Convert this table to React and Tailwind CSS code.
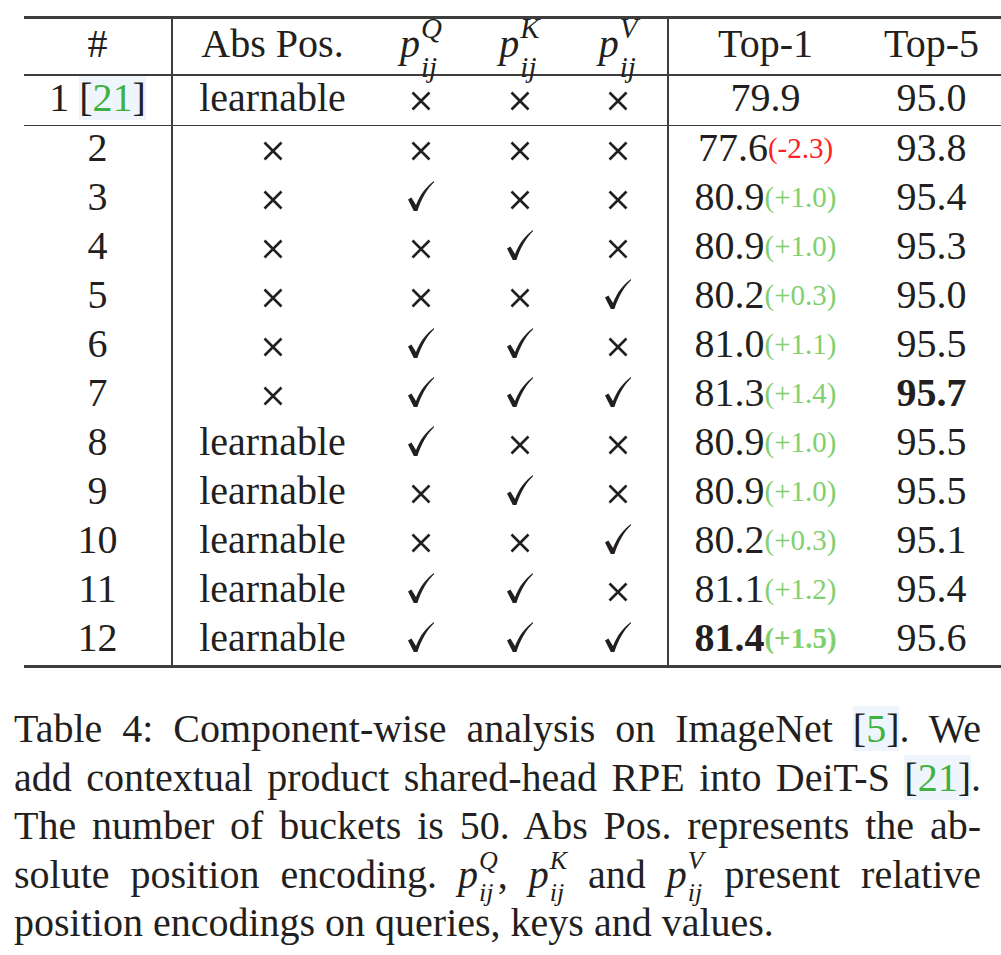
import React from "react"

const serif = { fontFamily: '"Liberation Serif", "Times New Roman", serif' }

const grid = "grid grid-cols-[147px_201px_98px_99px_98px_195px_139px]"

// table data: q/k/v true = check, false = cross; abs null = cross
const rows = [
  { n: "2", abs: null, q: false, k: false, v: false, top1: "77.6", d: "(-2.3)", neg: true, top5: "93.8" },
  { n: "3", abs: null, q: true, k: false, v: false, top1: "80.9", d: "(+1.0)", top5: "95.4" },
  { n: "4", abs: null, q: false, k: true, v: false, top1: "80.9", d: "(+1.0)", top5: "95.3" },
  { n: "5", abs: null, q: false, k: false, v: true, top1: "80.2", d: "(+0.3)", top5: "95.0" },
  { n: "6", abs: null, q: true, k: true, v: false, top1: "81.0", d: "(+1.1)", top5: "95.5" },
  { n: "7", abs: null, q: true, k: true, v: true, top1: "81.3", d: "(+1.4)", top5: "95.7", bold5: true },
  { n: "8", abs: "learnable", q: true, k: false, v: false, top1: "80.9", d: "(+1.0)", top5: "95.5" },
  { n: "9", abs: "learnable", q: false, k: true, v: false, top1: "80.9", d: "(+1.0)", top5: "95.5" },
  { n: "10", abs: "learnable", q: false, k: false, v: true, top1: "80.2", d: "(+0.3)", top5: "95.1" },
  { n: "11", abs: "learnable", q: true, k: true, v: false, top1: "81.1", d: "(+1.2)", top5: "95.4" },
  { n: "12", abs: "learnable", q: true, k: true, v: true, top1: "81.4", d: "(+1.5)", top5: "95.6", bold1: true },
]

const Check = () => (
  <svg width="26" height="30" viewBox="0 0 26 30" className="block -mt-[2px]">
    <path d="M0 18.5 L3.4 16.6 L8 24 C12 13.5 18 6 26 0 L26 1.2 C19 8 13.5 17.5 9.4 30 L5.8 30 Z" fill="#231f20" />
  </svg>
)

const Cross = () => (
  <svg width="20" height="20" viewBox="0 0 20 20" className="block mt-[5px]">
    <path d="M1.5 1.5 L18.5 18.5 M18.5 1.5 L1.5 18.5" stroke="#231f20" strokeWidth="2.6" />
  </svg>
)

const Mark = ({ on }) => (on ? <Check /> : <Cross />)

const Pij = ({ sup, small }) => (
  <span className="whitespace-nowrap">
    <span className="italic">p</span>
    {small ? (
      <span className="inline-flex flex-col italic text-[26px] leading-[24px] align-[19px] -mt-[14px] -mb-[16px] ml-[1px]">
        <span>{sup}</span>
        <span className="mt-[8px]">ij</span>
      </span>
    ) : (
      <span className="inline-flex flex-col italic text-[29px] leading-[26px] align-[19px] -mt-[14px] -mb-[22px] ml-[1px]">
        <span>{sup}</span>
        <span className="mt-[13px]">ij</span>
      </span>
    )}
  </span>
)

const Cite = ({ children }) => (
  <span className="bg-[#eef5fc]">
    [<span className="text-[#3fb13f]">{children}</span>]
  </span>
)

const Cell = ({ children, line }) => (
  <div className={`flex items-center justify-center pb-[6px] whitespace-nowrap ${line ? "border-l-2 border-[#3d3d3d]" : ""}`}>
    {children}
  </div>
)

const Delta = ({ text, neg, bold }) => (
  <span className={`text-[29px] align-[-3px] ${neg ? "text-[#ff2222]" : "text-[#82cf6f]"} ${bold ? "font-bold" : ""}`}>
    {text}
  </span>
)

export default function App() {
  return (
    <div className="w-[1001px] h-[955px] bg-white text-[#231f20] overflow-hidden" style={serif}>
      <div className="pt-[16px] pl-[24px]">
        <div className="border-t-[3px] border-b-[3px] border-[#3d3d3d] text-[40px] leading-[44px]">
          {/* header */}
          <div className={`${grid} h-[57px] border-b-2 border-[#3d3d3d]`}>
            <Cell>#</Cell>
            <Cell line>Abs Pos.</Cell>
            <Cell><Pij sup="Q" /></Cell>
            <Cell><Pij sup="K" /></Cell>
            <Cell><Pij sup="V" /></Cell>
            <Cell line>Top-1</Cell>
            <Cell>Top-5</Cell>
          </div>
          {/* baseline */}
          <div className={`${grid} h-[50px] border-b border-[#3d3d3d]`}>
            <Cell>1&nbsp;<Cite>21</Cite></Cell>
            <Cell line>learnable</Cell>
            <Cell><Cross /></Cell>
            <Cell><Cross /></Cell>
            <Cell><Cross /></Cell>
            <Cell line>79.9</Cell>
            <Cell>95.0</Cell>
          </div>
          {rows.map((r) => (
            <div key={r.n} className={`${grid} h-[49px]`}>
              <Cell>{r.n}</Cell>
              <Cell line>{r.abs ? r.abs : <Cross />}</Cell>
              <Cell><Mark on={r.q} /></Cell>
              <Cell><Mark on={r.k} /></Cell>
              <Cell><Mark on={r.v} /></Cell>
              <Cell line>
                <span className={r.bold1 ? "font-bold" : ""}>{r.top1}</span>
                <Delta text={r.d} neg={r.neg} bold={r.bold1} />
              </Cell>
              <Cell><span className={r.bold5 ? "font-bold" : ""}>{r.top5}</span></Cell>
            </div>
          ))}
        </div>
      </div>

      {/* caption */}
      <div className="pt-[37px] pl-[14px] w-[981px] text-[40px] leading-[48.5px]">
        <div className="text-justify [text-align-last:justify] whitespace-nowrap">
          Table 4: Component-wise analysis on ImageNet <Cite>5</Cite>. We
        </div>
        <div className="text-justify [text-align-last:justify] whitespace-nowrap">
          add contextual product shared-head RPE into DeiT-S <Cite>21</Cite>.
        </div>
        <div className="text-justify [text-align-last:justify] whitespace-nowrap">
          The number of buckets is 50. Abs Pos. represents the ab-
        </div>
        <div className="text-justify [text-align-last:justify] whitespace-nowrap">
          solute position encoding. <Pij sup="Q" small />, <Pij sup="K" small /> and <Pij sup="V" small /> present relative
        </div>
        <div className="whitespace-nowrap">position encodings on queries, keys and values.</div>
      </div>
    </div>
  )
}
